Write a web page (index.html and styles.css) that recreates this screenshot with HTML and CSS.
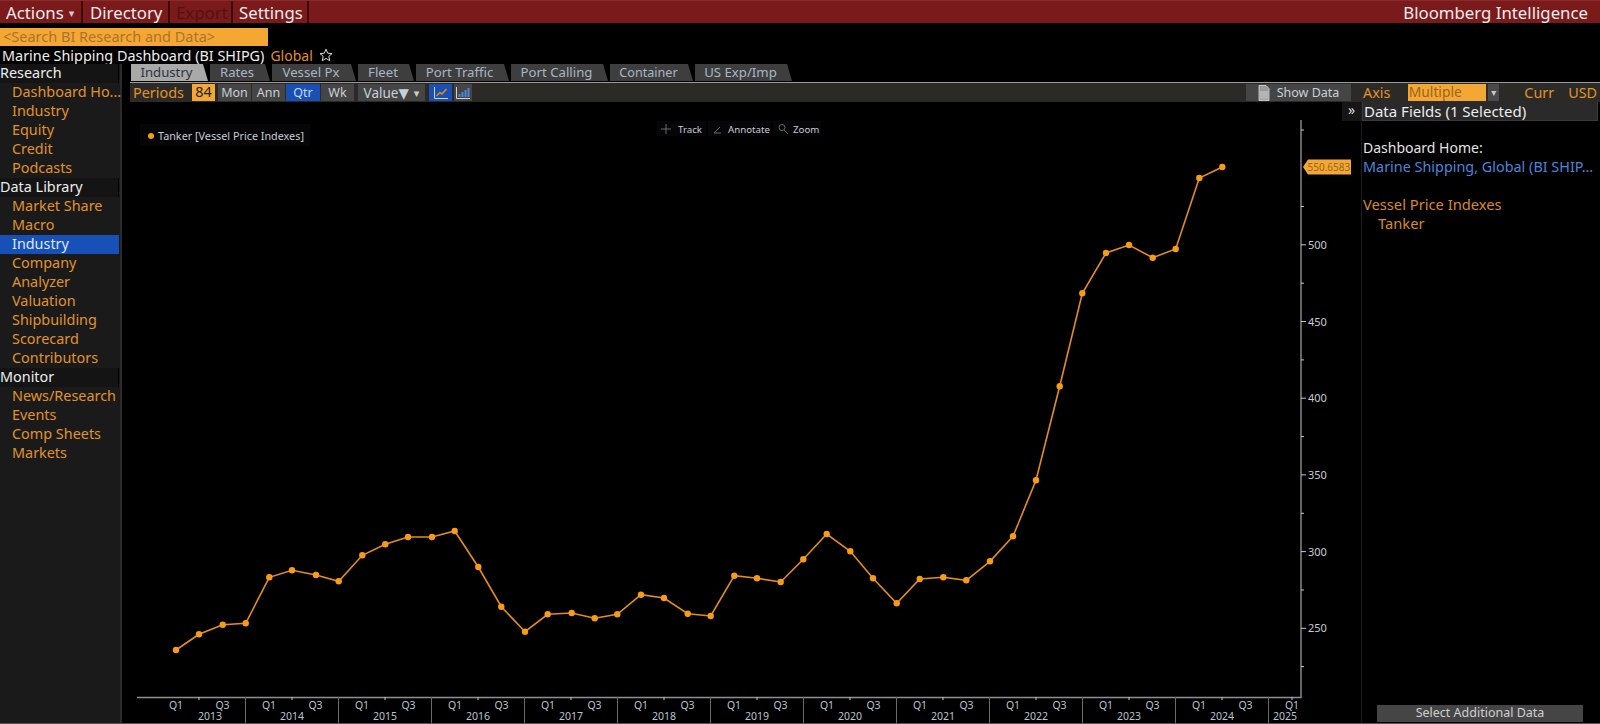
FILE: index.html
```html
<!DOCTYPE html>
<html lang="en">
<head>
<meta charset="utf-8">
<title>Marine Shipping Dashboard</title>
<link rel="stylesheet" href="styles.css">
</head>
<body>
<div class="app">
  <header class="menubar">
    <div class="menu menu-actions">Actions <span class="caret">▾</span></div>
    <div class="menu menu-directory">Directory</div>
    <div class="menu menu-export">Export</div>
    <div class="menu menu-settings">Settings</div>
    <div class="brand">Bloomberg Intelligence</div>
  </header>
  <div class="searchrow"><div class="search">&lt;Search BI Research and Data&gt;</div></div>
  <div class="titlerow">
    <span class="title">Marine Shipping Dashboard (BI SHIPG)</span>
    <span class="region">Global</span>
    <svg class="star" viewBox="0 0 14 14"><path d="M7 1.2 8.7 5.2 13 5.6 9.8 8.4 10.7 12.7 7 10.4 3.3 12.7 4.2 8.4 1 5.6 5.3 5.2Z"/></svg>
  </div>
  <div class="main">
    <nav class="sidebar">
      <div class="nav-head">Research</div>
      <div class="nav-item">Dashboard Ho...</div>
      <div class="nav-item">Industry</div>
      <div class="nav-item">Equity</div>
      <div class="nav-item">Credit</div>
      <div class="nav-item">Podcasts</div>
      <div class="nav-head">Data Library</div>
      <div class="nav-item">Market Share</div>
      <div class="nav-item">Macro</div>
      <div class="nav-item nav-active">Industry</div>
      <div class="nav-item">Company</div>
      <div class="nav-item">Analyzer</div>
      <div class="nav-item">Valuation</div>
      <div class="nav-item">Shipbuilding</div>
      <div class="nav-item">Scorecard</div>
      <div class="nav-item">Contributors</div>
      <div class="nav-head">Monitor</div>
      <div class="nav-item">News/Research</div>
      <div class="nav-item">Events</div>
      <div class="nav-item">Comp Sheets</div>
      <div class="nav-item">Markets</div>
    </nav>
    <div class="content">
      <div class="tabs">
        <div class="tab tab-on t-industry">Industry</div>
        <div class="tab t-rates">Rates</div>
        <div class="tab t-vessel">Vessel Px</div>
        <div class="tab t-fleet">Fleet</div>
        <div class="tab t-traffic">Port Traffic</div>
        <div class="tab t-calling">Port Calling</div>
        <div class="tab t-container">Container</div>
        <div class="tab t-exp">US Exp/Imp</div>
      </div>
      <div class="toolbar">
        <span class="lbl lbl-periods">Periods</span>
        <span class="periods">84</span>
        <span class="btn b-mon">Mon</span>
        <span class="btn b-ann">Ann</span>
        <span class="btn btn-on b-qtr">Qtr</span>
        <span class="btn b-wk">Wk</span>
        <span class="btn b-value">Value▼ <span class="caret">▾</span></span>
        <span class="btn btn-on b-icon">
          <svg class="ico" viewBox="0 0 16 14"><path class="ico-axis" d="M1.5 1v11.5H15"/><path class="ico-line" d="M3.5 10 7 6.5 9 8 13.5 3"/></svg>
        </span>
        <span class="btn b-icon2">
          <svg class="ico" viewBox="0 0 16 14"><path class="ico-axis" d="M1.5 1v11.5H15"/><path class="ico-bars" d="M4.5 11V8M7.5 11V6M10.5 11V4M13.5 11V2"/></svg>
        </span>
        <span class="spacer"></span>
        <span class="btn b-show">
          <svg class="doc" viewBox="0 0 12 16"><path d="M1 .5h7l3 3v12H1z"/><path d="M3 6v8M5 6v8M7 6v8M9 6v8"/></svg>
          Show Data
        </span>
        <div class="axisbox">
          <span class="lbl lbl-axis">Axis</span>
          <span class="select">Multiple</span>
          <span class="selectbtn">▾</span>
          <span class="lbl lbl-curr">Curr</span>
          <span class="lbl lbl-usd">USD</span>
        </div>
      </div>
      <div class="body">
        <svg class="chart" viewBox="122 102 1239 621" width="1239" height="621">
          <defs>
            <marker id="dot" markerUnits="userSpaceOnUse" markerWidth="8" markerHeight="8" refX="4" refY="4">
              <circle class="dot" cx="4" cy="4" r="3.2"/>
            </marker>
          </defs>

          <rect class="float" x="140" y="124" width="170" height="22"/>
          <circle class="dot" cx="151" cy="136" r="3"/>
          <text class="t-legend" x="158" y="140">Tanker [Vessel Price Indexes]</text>

          <rect class="float" x="657" y="121" width="49" height="15"/>
          <rect class="float" x="708" y="121" width="63" height="15"/>
          <rect class="float" x="773" y="121" width="48" height="15"/>
          <path class="tool" d="M666 124v10M661 129h10"/>
          <path class="tool" d="M714 133h7M714 133l6-6"/>
          <circle class="tool" cx="782" cy="127.5" r="3"/>
          <path class="tool" d="M784 130l4 4"/>
          <text class="t-tool" x="678" y="132.500">Track</text>
          <text class="t-tool" x="728" y="132.500">Annotate</text>
          <text class="t-tool" x="793" y="132.500">Zoom</text>

          <path class="axis" d="M1301 120V697.5H137"/>

          <path class="tick" d="M1301 130h3M1301 206.5h3M1301 283.2h3M1301 359.9h3M1301 436.6h3M1301 513.3h3M1301 590h3M1301 666.6h3"/>
          <path class="tick" d="M1301 244.8h5M1301 321.5h5M1301 398.2h5M1301 474.9h5M1301 551.6h5M1301 628.3h5"/>
          <text class="ylab" x="1308" y="249">500</text>
          <text class="ylab" x="1308" y="326">450</text>
          <text class="ylab" x="1308" y="402">400</text>
          <text class="ylab" x="1308" y="479">350</text>
          <text class="ylab" x="1308" y="556">300</text>
          <text class="ylab" x="1308" y="632">250</text>

          <path class="tick" d="M199 697v3M292 697v3M385 697v3M478 697v3M571 697v3M664 697v3M757 697v3M850 697v3M943 697v3M1036 697v3M1129 697v3M1222 697v3M1292 697v3"/>
          <path class="sep" d="M245.5 697v26M338.5 697v26M431.5 697v26M524.5 697v26M617.5 697v26M710.5 697v26M803.5 697v26M896.5 697v26M989.5 697v26M1082.5 697v26M1175.5 697v26M1268.5 697v26"/>

          <g class="xlab">
            <text x="176" y="709">Q1</text><text x="222.5" y="709">Q3</text>
            <text x="269" y="709">Q1</text><text x="315.5" y="709">Q3</text>
            <text x="362" y="709">Q1</text><text x="408.5" y="709">Q3</text>
            <text x="455" y="709">Q1</text><text x="501.5" y="709">Q3</text>
            <text x="548" y="709">Q1</text><text x="594.5" y="709">Q3</text>
            <text x="641" y="709">Q1</text><text x="687.5" y="709">Q3</text>
            <text x="734" y="709">Q1</text><text x="780.5" y="709">Q3</text>
            <text x="827" y="709">Q1</text><text x="873.5" y="709">Q3</text>
            <text x="920" y="709">Q1</text><text x="966.5" y="709">Q3</text>
            <text x="1013" y="709">Q1</text><text x="1059.5" y="709">Q3</text>
            <text x="1106" y="709">Q1</text><text x="1152.5" y="709">Q3</text>
            <text x="1199" y="709">Q1</text><text x="1245.5" y="709">Q3</text>
            <text x="1292" y="709">Q1</text>
            <text x="210" y="720">2013</text><text x="292" y="720">2014</text>
            <text x="385" y="720">2015</text><text x="478" y="720">2016</text>
            <text x="571" y="720">2017</text><text x="664" y="720">2018</text>
            <text x="757" y="720">2019</text><text x="850" y="720">2020</text>
            <text x="943" y="720">2021</text><text x="1036" y="720">2022</text>
            <text x="1129" y="720">2023</text><text x="1222" y="720">2024</text>
            <text x="1285" y="720">2025</text>
          </g>

          <polyline class="series" points="176,650 199,634.3 222.7,624.7 245.7,623.3 269.3,577.3 292,570.3 316,575 338.7,581.3 362.3,555.3 385.3,544.3 408,537 432,537 454.7,531 478.3,567 501.3,606.7 525,631.7 547.7,614.3 571.7,613 594.7,618.3 617.3,614.3 641,594.7 664,598 687.7,613.7 710.7,616 734.3,575.7 757,578.3 780.7,582 803.3,559.3 826.7,534 850.3,551.3 873,578.3 896.7,603.3 919.7,579 943.3,577.3 966.3,580.3 990,561.3 1013,536.3 1036,480.3 1059.7,386.3 1082.3,293.3 1106,253 1129,245 1152.7,257.7 1175.7,249 1199.3,178 1222.3,167"/>

          <path class="flag" d="M1303 167 1308 159.5H1351V174.5H1308Z"/>
          <text class="flagtxt" x="1307.500" y="171">550.6583</text>
        </svg>
        <aside class="panel">
          <div class="expander">»</div>
          <div class="panel-col">
            <div class="panel-head">Data Fields (1 Selected)</div>
            <div class="panel-text">
              <div class="p-white">Dashboard Home:</div>
              <div class="p-blue">Marine Shipping, Global (BI SHIP...</div>
              <div class="p-gap"></div>
              <div class="p-orange">Vessel Price Indexes</div>
              <div class="p-orange p-indent">Tanker</div>
            </div>
            <div class="select-data">Select Additional Data</div>
          </div>
        </aside>
      </div>
    </div>
  </div>
</div>
</body>
</html>
```
FILE: styles.css
```css
* { box-sizing: border-box; }
html, body { margin: 0; padding: 0; background: #000; }
body { font-family: "Noto Sans", "DejaVu Sans", sans-serif; font-size: 14.4px; color: #e8e8e8; overflow: hidden; }
.app { width: 1600px; height: 724px; display: flex; flex-direction: column; overflow: hidden; border-bottom: 1px solid #555; }

.menubar { height: 23px; flex: none; background: #7b1a1b; display: flex; align-items: center; font-size: 16.800px; color: #ececec; border-top: 1px solid #8a2a2a; }
.menu { height: 100%; display: flex; align-items: center; padding-left: 6px; gap: 5px; border-right: 2px solid #3a0b0b; }
.menu-actions { width: 83px; }
.menu-directory { width: 87px; padding-left: 7px; }
.menu-export { width: 63px; color: #4e1414; }
.menu-settings { width: 76px; }
.caret { font-size: 11px; color: #d8c8c8; }
.brand { margin-left: auto; padding-right: 12px; }

.searchrow { height: 23px; flex: none; padding-top: 5px; }
.search { width: 268px; height: 18px; background: #f5a733; color: #a87430; font-size: 14.500px; line-height: 17px; padding-left: 3px; }

.titlerow { height: 18px; flex: none; display: flex; align-items: center; gap: 6px; padding-left: 2px; font-size: 14.400px; }
.title { color: #eee; }
.region { color: #e09020; font-size: 14px; }
.star { width: 14px; height: 14px; fill: none; stroke: #ddd; stroke-width: 1; }

.main { flex: 1; display: flex; min-height: 0; }

.sidebar { width: 122px; flex: none; background: #1a1a1a; border-right: 2px solid #2b2b2b; padding-right: 1px; }
.nav-head, .nav-item { height: 19px; line-height: 18px; font-size: 14.400px; white-space: nowrap; }
.nav-head { color: #ececec; background: #141414; border-right: 1px solid #000; }
.nav-item { color: #e0932c; padding-left: 12px; }
.nav-active { background: #1751b8; color: #dfe8f5; }

.content { flex: 1; min-width: 0; display: flex; flex-direction: column; }

.tabs { height: 18px; flex: none; display: flex; gap: 2px; padding-left: 9px; font-size: 13.200px; }
.tab { height: 17px; background: #3e3e3e; color: #a9b6c4; line-height: 17px; text-align: center; clip-path: polygon(0 0, calc(100% - 5px) 0, 100% 100%, 0 100%); padding-right: 6px; }
.tab-on { background: #a9a9a9; color: #2c3440; }
.t-industry { width: 77px; }
.t-rates { width: 60px; }
.t-vessel { width: 84px; }
.t-fleet { width: 56px; }
.t-traffic { width: 93px; }
.t-calling { width: 97px; }
.t-container { width: 83px; font-size: 12.600px; }
.t-exp { width: 97px; }

.toolbar { height: 20px; flex: none; display: flex; align-items: center; background: #2c2a26; border-top: 1px solid #9a9a9a; margin-left: 8px; padding-left: 3px; font-size: 13.500px; }
.lbl { color: #e0932c; }
.lbl-periods { width: 59px; font-size: 14.400px; }
.periods { width: 23px; height: 17px; background: #f5a733; color: #222; text-align: center; line-height: 16px; font-size: 14.400px; margin-right: 3px; }
.btn { height: 17px; background: #454545; color: #c8d0d8; display: flex; align-items: center; justify-content: center; margin-right: 1px; font-size: 12.500px; }
.btn-on { background: #1a50b4; color: #c6d6ee; }
.b-mon { width: 33px; }
.b-ann { width: 33px; }
.b-qtr { width: 34px; }
.b-wk { width: 33px; margin-right: 4px; }
.b-value { width: 67px; gap: 5px; margin-right: 4px; font-size: 13.500px; }
.b-icon { width: 23px; margin-right: 2px; }
.b-icon2 { width: 18px; }
.ico { width: 16px; height: 14px; fill: none; }
.ico-axis { stroke: #d0d4da; stroke-width: 1; }
.ico-line { stroke: #d88a20; stroke-width: 1.6; }
.ico-bars { stroke: #4a86d8; stroke-width: 2; }
.spacer { flex: 1; }
.b-show { width: 105px; gap: 7px; margin-right: 0; font-size: 12.500px; }
.doc { width: 12px; height: 16px; fill: #999; stroke: #ddd; stroke-width: .8; }
.axisbox { width: 249px; height: 100%; flex: none; display: flex; align-items: center; padding-left: 12px; font-size: 14.400px; }
.lbl-axis { width: 45px; }
.select { width: 79px; height: 17px; background: #f5a733; color: #96661e; font-size: 13.800px; line-height: 16px; padding-left: 1px; margin-right: 2px; }
.selectbtn { width: 11px; height: 17px; background: #4a4a4a; color: #ccc; font-size: 10px; line-height: 16px; text-align: center; }
.lbl-curr { margin-left: 25px; width: 44px; }
.lbl-usd { width: 32px; }

.body { flex: 1; min-height: 0; display: flex; }
.chart { flex: none; display: block; }
.float { fill: #060608; }
.dot { fill: #f89c14; }
.t-legend { font-size: 10.800px; fill: #c6ccd4; }
.t-tool { font-size: 9.700px; fill: #c6ccd4; }
.tool { fill: none; stroke: #6a6a6a; stroke-width: 1; }
.axis { fill: none; stroke: #8f8f8f; stroke-width: 1.4; }
.tick { fill: none; stroke: #c8c8c8; stroke-width: 1; }
.sep { fill: none; stroke: #6a6a6a; stroke-width: 1; }
.ylab { font-size: 11px; fill: #c4ccd4; }
.xlab { font-size: 10.500px; fill: #b8c4d0; text-anchor: middle; }
.series { fill: none; stroke: #e48f14; stroke-width: 1.6; marker-start: url(#dot); marker-mid: url(#dot); marker-end: url(#dot); }
.flag { fill: #f5a733; }
.flagtxt { font-size: 10px; fill: #96661e; }

.panel { flex: 1; min-width: 0; display: flex; position: relative; }
.expander { position: absolute; left: -19px; top: 0; width: 19px; height: 19px; background: #161616; color: #ddd; text-align: center; line-height: 16px; font-size: 14px; }
.panel-col { flex: 1; display: flex; flex-direction: column; border-left: 1px solid #1c1c1c; }
.panel-head { height: 19px; margin-right: 2px; background: #2a2a2a; border: 1px solid #3a3a3a; border-top: 0; color: #ececec; font-size: 15px; line-height: 18px; padding-left: 1px; }
.panel-text { flex: 1; padding: 17px 0 0 1px; line-height: 19px; }
.p-white { color: #e4e4e4; font-size: 14px; }
.p-blue { color: #4a86dc; white-space: nowrap; }
.p-gap { height: 19px; }
.p-orange { color: #d98a26; font-size: 14.700px; }
.p-indent { padding-left: 15px; }
.select-data { height: 17px; width: 206px; margin: 0 0 1px 15px; background: #454545; color: #d0d0d0; text-align: center; font-size: 12.500px; line-height: 16px; }
```
